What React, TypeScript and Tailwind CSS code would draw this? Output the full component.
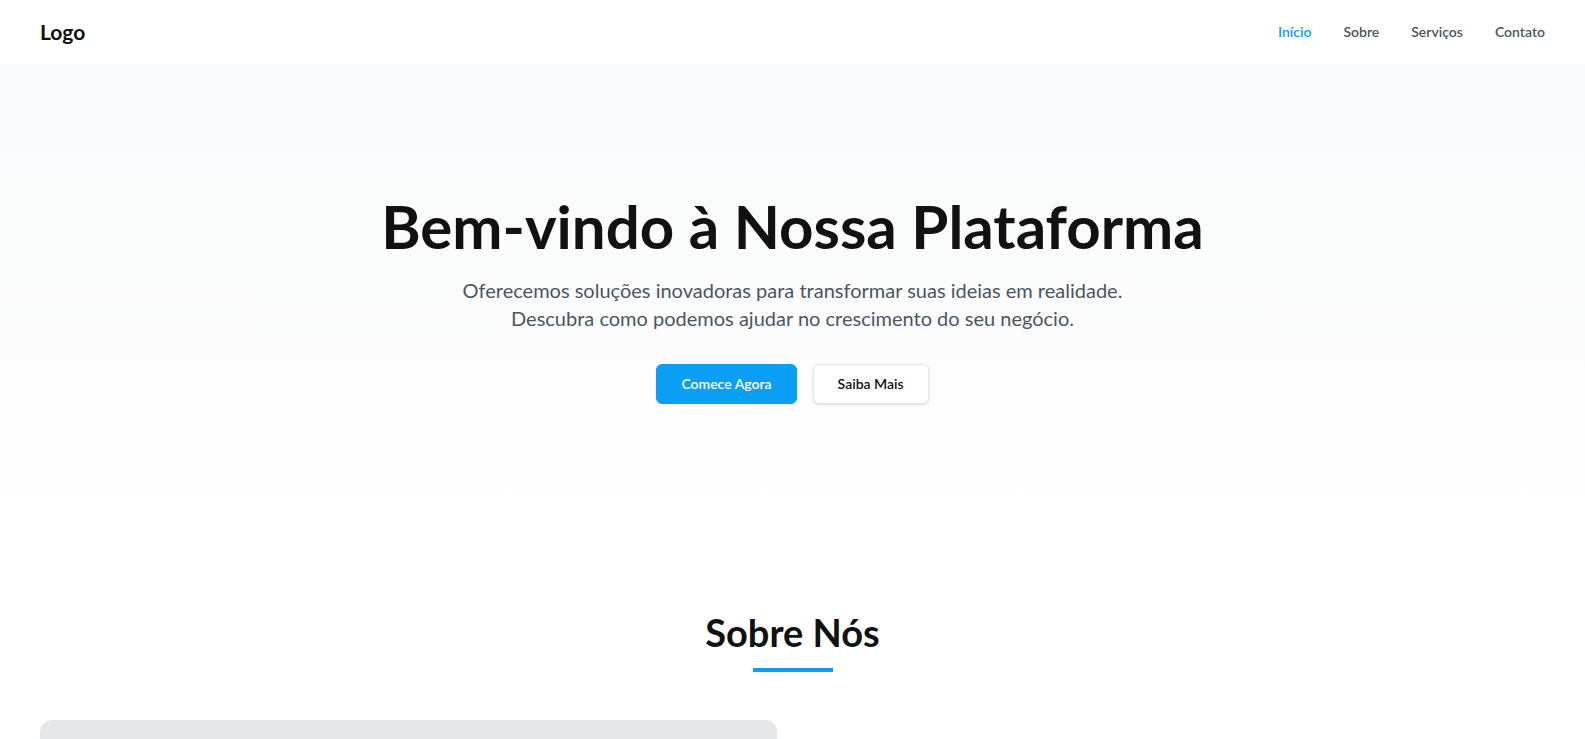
import React from "react";

export default function App() {
  const font = { fontFamily: '"Segoe UI", Lato, "Open Sans", sans-serif' };
  return (
    <div className="min-h-screen bg-white text-[#111]" style={font}>
      <header className="flex h-16 items-center justify-between bg-white px-10">
        <div className="text-[21px] font-bold text-[#111]">Logo</div>
        <nav className="flex items-center gap-8 text-sm font-semibold text-[#4b5563]">
          <a className="text-[#0a9ef5]">Início</a>
          <a>Sobre</a>
          <a>Serviços</a>
          <a>Contato</a>
        </nav>
      </header>
      <section className="bg-gradient-to-b from-[#f8f9fa] to-white pt-[132px] pb-[134px] text-center">
        <h1 className="text-6xl font-bold leading-none text-[#111]">Bem-vindo à Nossa Plataforma</h1>
        <p className="mt-5 text-xl leading-7 text-[#4b5563]">
          Oferecemos soluções inovadoras para transformar suas ideias em realidade.
          <br />
          Descubra como podemos ajudar no crescimento do seu negócio.
        </p>
        <div className="mt-8 flex justify-center gap-4">
          <button className="rounded-md border border-[#0a9ef5] bg-[#0a9ef5] px-6 py-[9px] text-sm font-semibold text-white">
            Comece Agora
          </button>
          <button className="rounded-md border border-[#e5e7eb] bg-white px-6 py-[9px] text-sm font-semibold text-[#111] shadow-sm">
            Saiba Mais
          </button>
        </div>
      </section>
      <section className="px-10 pt-[74px]">
        <h2 className="text-center text-[38px] font-bold leading-10 text-[#111]">Sobre Nós</h2>
        <div className="mx-auto mt-4 h-1 w-20 bg-[#0a9ef5]" />
        <div className="mt-12 grid grid-cols-2 gap-8">
          <div className="h-80 rounded-xl bg-[#e5e7eb]" />
          <div />
        </div>
      </section>
    </div>
  );
}
